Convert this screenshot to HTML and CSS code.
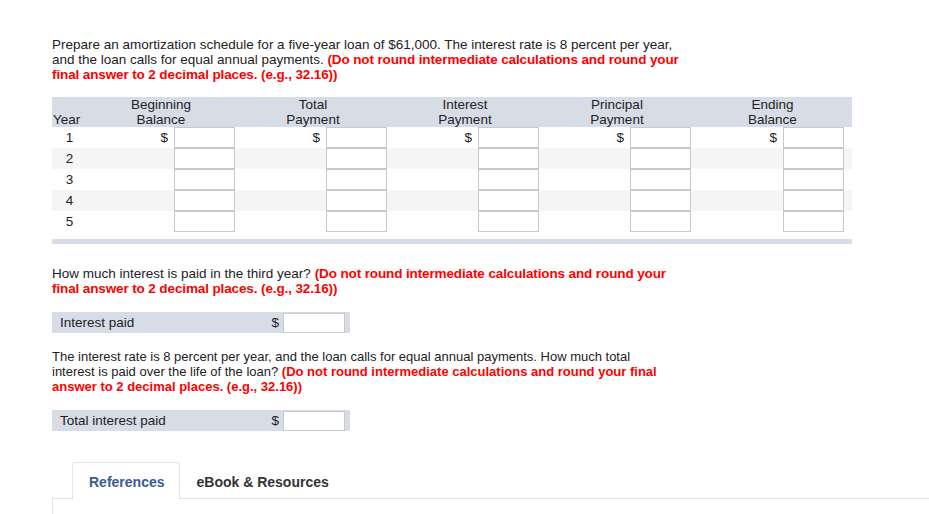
FILE: index.html
```html
<!DOCTYPE html>
<html lang="en">
<head>
    <meta charset="UTF-8" />
    <title>Amortization Schedule</title>
    <link rel="stylesheet" href="styles.css">
</head>
<body>
    <div class="page">
        <p class="question">Prepare an amortization schedule for a five-year loan of $61,000. The interest rate is 8 percent per year,<br>and the loan calls for equal annual payments. <b class="hint">(Do not round intermediate calculations and round your<br>final answer to 2 decimal places. (e.g., 32.16))</b></p>

        <table class="schedule">
            <colgroup>
                <col class="col-year">
                <col class="col-amt">
                <col class="col-amt">
                <col class="col-amt">
                <col class="col-amt">
                <col class="col-last">
            </colgroup>
            <thead>
                <tr>
                    <th class="year">Year</th>
                    <th>Beginning<br>Balance</th>
                    <th>Total<br>Payment</th>
                    <th>Interest<br>Payment</th>
                    <th>Principal<br>Payment</th>
                    <th class="last">Ending<br>Balance</th>
                </tr>
            </thead>
            <tbody>
                <tr>
                    <td class="year">1</td>
                    <td><div class="cell"><span class="cur">$</span><input type="text"></div></td>
                    <td><div class="cell"><span class="cur">$</span><input type="text"></div></td>
                    <td><div class="cell"><span class="cur">$</span><input type="text"></div></td>
                    <td><div class="cell"><span class="cur">$</span><input type="text"></div></td>
                    <td class="last"><div class="cell"><span class="cur">$</span><input type="text"></div></td>
                </tr>
                <tr>
                    <td class="year">2</td>
                    <td><div class="cell"><input type="text"></div></td>
                    <td><div class="cell"><input type="text"></div></td>
                    <td><div class="cell"><input type="text"></div></td>
                    <td><div class="cell"><input type="text"></div></td>
                    <td class="last"><div class="cell"><input type="text"></div></td>
                </tr>
                <tr>
                    <td class="year">3</td>
                    <td><div class="cell"><input type="text"></div></td>
                    <td><div class="cell"><input type="text"></div></td>
                    <td><div class="cell"><input type="text"></div></td>
                    <td><div class="cell"><input type="text"></div></td>
                    <td class="last"><div class="cell"><input type="text"></div></td>
                </tr>
                <tr>
                    <td class="year">4</td>
                    <td><div class="cell"><input type="text"></div></td>
                    <td><div class="cell"><input type="text"></div></td>
                    <td><div class="cell"><input type="text"></div></td>
                    <td><div class="cell"><input type="text"></div></td>
                    <td class="last"><div class="cell"><input type="text"></div></td>
                </tr>
                <tr>
                    <td class="year">5</td>
                    <td><div class="cell"><input type="text"></div></td>
                    <td><div class="cell"><input type="text"></div></td>
                    <td><div class="cell"><input type="text"></div></td>
                    <td><div class="cell"><input type="text"></div></td>
                    <td class="last"><div class="cell"><input type="text"></div></td>
                </tr>
            </tbody>
        </table>
        <div class="table-foot"></div>

        <p class="question q2">How much interest is paid in the third year? <b class="hint">(Do not round intermediate calculations and round your<br>final answer to 2 decimal places. (e.g., 32.16))</b></p>

        <div class="answer">
            <span class="answer-label">Interest paid</span>
            <span class="cur">$</span>
            <input type="text">
        </div>

        <p class="question q3">The interest rate is 8 percent per year, and the loan calls for equal annual payments. How much total<br>interest is paid over the life of the loan? <b class="hint">(Do not round intermediate calculations and round your final<br>answer to 2 decimal places. (e.g., 32.16))</b></p>

        <div class="answer">
            <span class="answer-label">Total interest paid</span>
            <span class="cur">$</span>
            <input type="text">
        </div>

        <div class="tabs">
            <div class="tab-list">
                <div class="tab active">References</div>
                <div class="tab">eBook &amp; Resources</div>
            </div>
            <div class="tab-panel"></div>
        </div>
    </div>
</body>
</html>
```

FILE: styles.css
```css
body {
    margin: 0;
    background-color: #fff;
    font-family: "Liberation Sans", Arial, Helvetica, sans-serif;
    font-size: 13.5px;
    color: #222;
}
.page {
    padding: 37px 0 0 52px;
}
.question {
    margin: 0;
    width: 700px;
    line-height: 15px;
}
.hint {
    color: #f00;
    font-weight: bold;
    letter-spacing: -0.12px;
}
.schedule {
    margin-top: 15px;
    border-collapse: collapse;
    border-spacing: 0;
    table-layout: fixed;
    width: 800px;
}
.col-year {
    width: 33px;
}
.col-amt {
    width: 152px;
}
.col-last {
    width: 159px;
}
.schedule th {
    background-color: #d8dce6;
    font-weight: normal;
    line-height: 15px;
    height: 30px;
    padding: 0;
    text-align: center;
    vertical-align: bottom;
}
.schedule th.year {
    text-align: left;
    padding-left: 1px;
}
.schedule td {
    height: 21px;
    padding: 0 2px 0 0;
}
.schedule td.last {
    padding-right: 8px;
}
.schedule td.year {
    text-align: center;
    padding: 0 0 0 2px;
}
.schedule tbody tr:nth-child(even) {
    background-color: #f5f5f5;
}
.cell {
    display: flex;
    justify-content: flex-end;
    align-items: center;
    gap: 6px;
}
input {
    box-sizing: border-box;
    width: 61px;
    height: 21px;
    margin: 0;
    padding: 0 3px;
    border: 1px solid #c9c9c9;
    background: #fff;
    font: inherit;
}
.table-foot {
    margin-top: 7px;
    width: 800px;
    height: 5px;
    background-color: #d8dce6;
}
.q2 {
    margin-top: 22px;
}
.answer {
    margin-top: 16px;
    width: 298px;
    height: 21px;
    box-sizing: border-box;
    padding: 0 5px 0 8px;
    display: flex;
    align-items: center;
    background-color: #d8dce6;
}
.answer-label {
    flex: 1;
}
.answer .cur {
    margin-right: 4px;
}
.answer input {
    width: 62px;
    height: 20px;
}
.q3 {
    margin-top: 16px;
    font-size: 13px;
}
.q3 .hint {
    letter-spacing: 0;
}
.tabs {
    margin-top: 31px;
}
.tab-list {
    display: flex;
    padding-left: 20px;
    position: relative;
    z-index: 1;
}
.tab {
    font-family: "Liberation Sans", Arial, sans-serif;
    font-size: 14px;
    font-weight: bold;
    color: #333;
    height: 36px;
    line-height: 38px;
    padding: 0 17px;
    box-sizing: border-box;
    border: 1px solid transparent;
    border-bottom: none;
}
.tab.active {
    color: #3b5b8f;
    background: #fff;
    border-color: #e4e4e4;
    border-radius: 3px 3px 0 0;
    height: 37px;
    margin-bottom: -1px;
    padding: 0 14px 0 16px;
}
.tab + .tab {
    padding-left: 17px;
    border-left: none;
}
.tab-panel {
    height: 60px;
    border-top: 1px solid #e4e4e4;
    border-left: 1px solid #e4e4e4;
}
```
